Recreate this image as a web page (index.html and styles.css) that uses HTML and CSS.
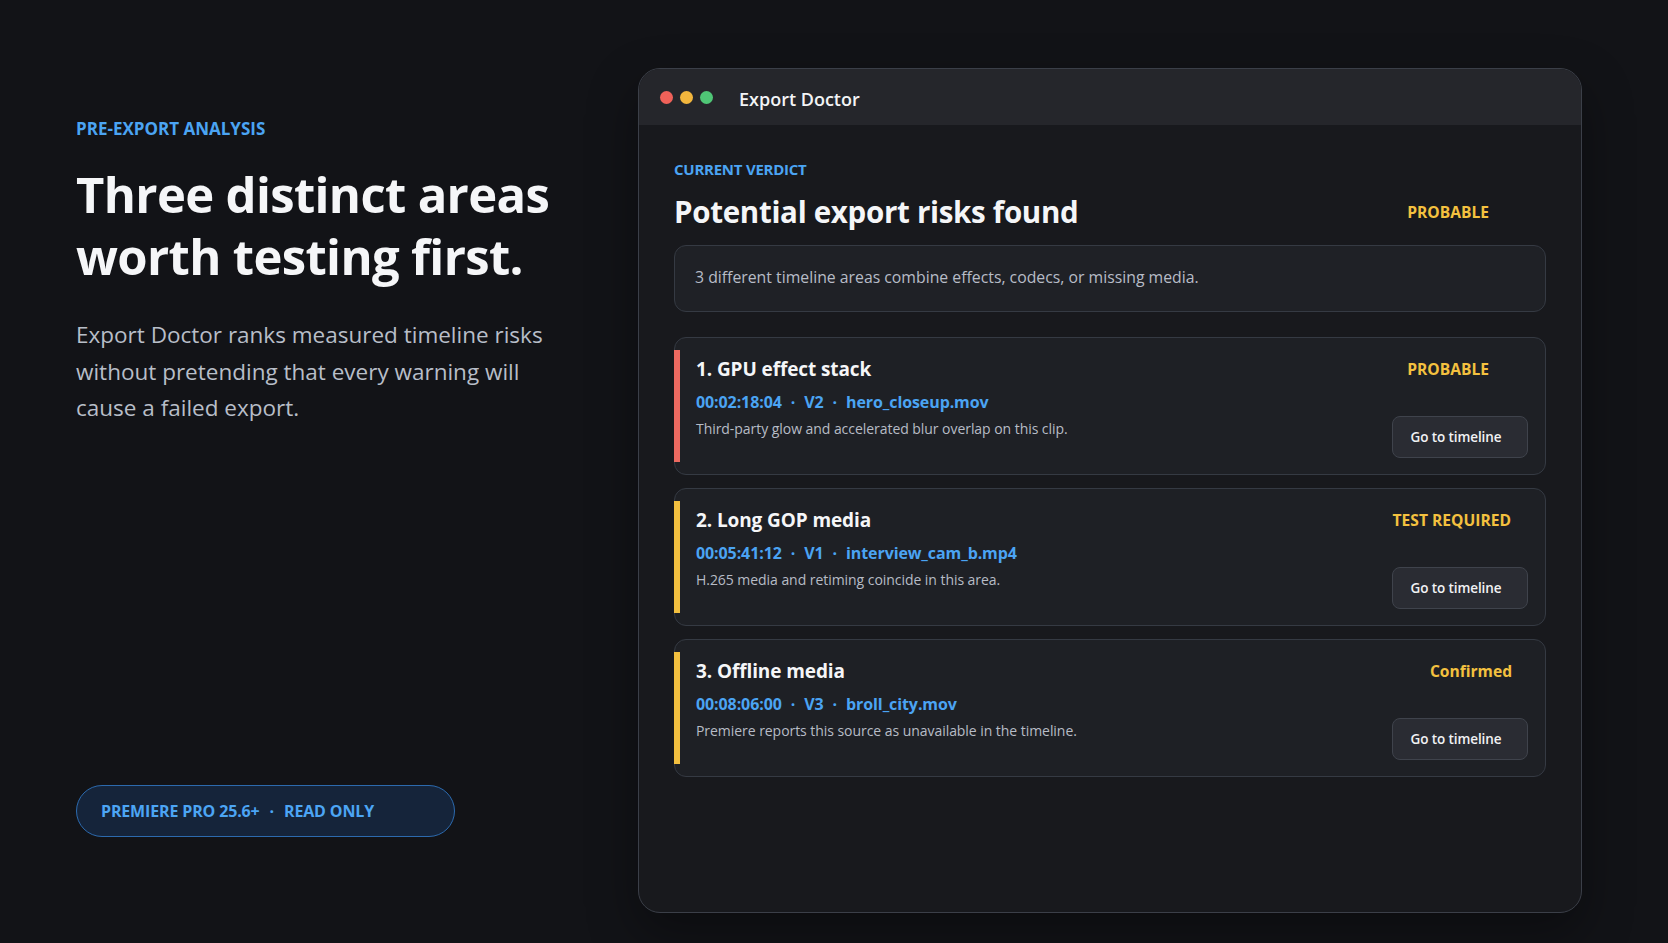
FILE: index.html
```html
<!DOCTYPE html>
<html lang="en">
<head>
<meta charset="utf-8">
<title>Export Doctor</title>
<link rel="stylesheet" href="styles.css">
</head>
<body>
<div class="page">
  <section class="intro">
    <p class="eyebrow">PRE-EXPORT ANALYSIS</p>
    <h1 class="headline">Three distinct areas worth testing first.</h1>
    <p class="lede">Export Doctor ranks measured timeline risks without pretending that every warning will cause a failed export.</p>
    <div class="pill"><span>PREMIERE PRO 25.6+</span><span class="pill-sep">·</span><span>READ ONLY</span></div>
  </section>

  <section class="window">
    <header class="titlebar">
      <span class="light light-red"></span>
      <span class="light light-yellow"></span>
      <span class="light light-green"></span>
      <span class="win-title">Export Doctor</span>
    </header>
    <div class="win-body">
      <p class="section-label">CURRENT VERDICT</p>
      <div class="verdict-head">
        <h2 class="verdict-title">Potential export risks found</h2>
        <span class="tag tag-probable">PROBABLE</span>
      </div>
      <div class="summary">3 different timeline areas combine effects, codecs, or missing media.</div>

      <div class="risk-list">
        <article class="risk risk-red">
          <div class="risk-main">
            <h3 class="risk-title">1. GPU effect stack</h3>
            <p class="risk-meta"><span>00:02:18:04</span><span class="dot">·</span><span>V2</span><span class="dot">·</span><span>hero_closeup.mov</span></p>
            <p class="risk-desc">Third-party glow and accelerated blur overlap on this clip.</p>
          </div>
          <div class="risk-side">
            <span class="tag tag-probable">PROBABLE</span>
            <button class="btn">Go to timeline</button>
          </div>
        </article>

        <article class="risk risk-yellow">
          <div class="risk-main">
            <h3 class="risk-title">2. Long GOP media</h3>
            <p class="risk-meta"><span>00:05:41:12</span><span class="dot">·</span><span>V1</span><span class="dot">·</span><span>interview_cam_b.mp4</span></p>
            <p class="risk-desc">H.265 media and retiming coincide in this area.</p>
          </div>
          <div class="risk-side">
            <span class="tag tag-test">TEST REQUIRED</span>
            <button class="btn">Go to timeline</button>
          </div>
        </article>

        <article class="risk risk-yellow">
          <div class="risk-main">
            <h3 class="risk-title">3. Offline media</h3>
            <p class="risk-meta"><span>00:08:06:00</span><span class="dot">·</span><span>V3</span><span class="dot">·</span><span>broll_city.mov</span></p>
            <p class="risk-desc">Premiere reports this source as unavailable in the timeline.</p>
          </div>
          <div class="risk-side">
            <span class="tag tag-confirmed">Confirmed</span>
            <button class="btn">Go to timeline</button>
          </div>
        </article>
      </div>
    </div>
  </section>
</div>
</body>
</html>
```

FILE: styles.css
```css
* { box-sizing: border-box; }

html, body {
  margin: 0;
  padding: 0;
}

body {
  background: #121317;
  color: #f2f3f5;
  font-family: "Open Sans", "Noto Sans", sans-serif;
  width: 1668px;
  height: 943px;
  overflow: hidden;
}

.page {
  display: flex;
  gap: 82px;
  height: 943px;
  padding: 68px 86px 30px 76px;
}

/* ---------- left intro column ---------- */
.intro {
  width: 480px;
  display: flex;
  flex-direction: column;
  padding-top: 49px;
  padding-bottom: 76px;
}

.eyebrow {
  margin: 0;
  font-size: 17px;
  line-height: 24px;
  font-weight: 700;
  color: #4ba4f3;
  letter-spacing: 0;
}

.headline {
  margin: 22px 0 0;
  font-size: 49px;
  line-height: 62px;
  font-weight: 700;
  letter-spacing: -0.65px;
  color: #f5f6f8;
}

.lede {
  margin: 30px 0 0;
  font-size: 22.5px;
  line-height: 36.5px;
  color: #b8bec8;
}

.pill {
  margin-top: auto;
  width: 379px;
  height: 52px;
  border-radius: 26px;
  border: 1.5px solid #2c6aae;
  background: #15243a;
  display: flex;
  align-items: center;
  padding-left: 24px;
  font-size: 16px;
  font-weight: 700;
  color: #4ca5f4;
  letter-spacing: -0.15px;
}

.pill-sep {
  margin: 0 10px;
}

/* ---------- window ---------- */
.window {
  width: 944px;
  height: 845px;
  border: 1.5px solid #3b3f48;
  border-radius: 22px;
  background: #18191d;
  overflow: hidden;
  display: flex;
  flex-direction: column;
  box-shadow: 0 20px 50px rgba(0, 0, 0, 0.35);
}

.titlebar {
  height: 56px;
  flex: none;
  background: #25262b;
  display: flex;
  align-items: center;
  padding-left: 21px;
  gap: 7px;
}

.light {
  width: 13px;
  height: 13px;
  border-radius: 50%;
}
.light-red { background: #ef6159; }
.light-yellow { background: #f2b63d; }
.light-green { background: #4fc676; }

.win-title {
  margin-left: 19px;
  margin-top: 3px;
  font-size: 18px;
  font-weight: 600;
  color: #f3f4f6;
  letter-spacing: 0;
}

.win-body {
  padding: 34px 35px 0 35px;
}

.section-label {
  margin: 0;
  font-size: 15px;
  line-height: 20px;
  font-weight: 700;
  color: #4ba4f3;
  letter-spacing: -0.25px;
}

.verdict-head {
  margin-top: 15px;
  display: flex;
  align-items: center;
  justify-content: space-between;
  padding-right: 18px;
}

.verdict-title {
  margin: 0;
  font-size: 29.5px;
  line-height: 36px;
  font-weight: 700;
  letter-spacing: -0.3px;
  color: #f5f6f8;
}

.tag {
  font-size: 15.6px;
  line-height: 26px;
  font-weight: 700;
  color: #f4c13f;
  letter-spacing: 0;
}
.tag-probable { margin-right: 39px; }
.tag-test { margin-right: 17px; }
.tag-confirmed { margin-right: 16px; }

.summary {
  margin-top: 15px;
  border: 1px solid #353a43;
  border-radius: 12px;
  background: #1f2126;
  padding: 19px 20px 21px;
  font-size: 15.8px;
  line-height: 25px;
  color: #b7bcc6;
}

.risk-list {
  margin-top: 25px;
  display: flex;
  flex-direction: column;
  gap: 13px;
}

.risk {
  position: relative;
  display: flex;
  justify-content: space-between;
  border: 1px solid #353a43;
  border-radius: 12px;
  background: #1e2025;
  padding: 18px 17px 16px 21px;
  height: 138px;
}

.risk::before {
  content: "";
  position: absolute;
  left: -1px;
  top: 12px;
  bottom: 12px;
  width: 6px;
}
.risk-red::before { background: #ec6960; }
.risk-yellow::before { background: #f2bf3f; }

.risk-title {
  margin: 0;
  font-size: 19px;
  line-height: 26px;
  font-weight: 700;
  letter-spacing: -0.1px;
  color: #f5f6f8;
}

.risk-meta {
  margin: 9px 0 0;
  font-size: 16px;
  line-height: 22px;
  font-weight: 700;
  color: #4ba4f3;
  letter-spacing: -0.1px;
}

.risk-meta .dot {
  margin: 0 9px;
}

.risk-desc {
  margin: 6px 0 0;
  font-size: 14px;
  line-height: 20px;
  color: #b7bcc6;
  letter-spacing: -0.05px;
}

.risk-side {
  display: flex;
  flex-direction: column;
  align-items: flex-end;
  justify-content: space-between;
}

.btn {
  width: 136px;
  height: 42px;
  border: 1px solid #3f434c;
  border-radius: 8px;
  background: #2a2c33;
  color: #f1f2f4;
  font-family: "Open Sans", "Noto Sans", sans-serif;
  font-size: 13.5px;
  font-weight: 600;
  letter-spacing: -0.1px;
  padding: 0 8px 0 0;
}
```
